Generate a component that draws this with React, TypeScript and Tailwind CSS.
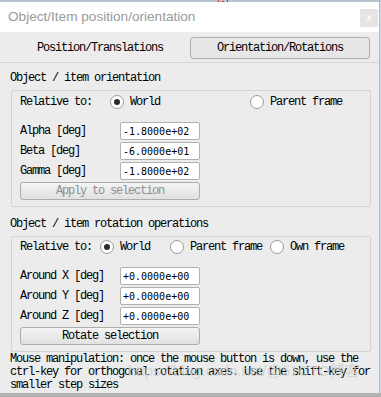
import React from "react";

const mono = { fontFamily: '"Liberation Mono", "Courier New", monospace' };
const inMono = { fontFamily: '"DejaVu Sans Mono", "Liberation Mono", monospace' };

function Radio({ checked }: { checked?: boolean }) {
  return (
    <span className="w-[14px] h-[14px] rounded-full border border-[#9c9c9c] bg-white flex items-center justify-center shrink-0">
      {checked && <span className="w-[6px] h-[6px] rounded-full bg-[#2b2b2b]" />}
    </span>
  );
}

function Field({ label, value }: { label: string; value: string }) {
  return (
    <div className="flex items-center h-[18px] mb-[2px]">
      <span className="w-[100px] text-[12px] leading-[13px] tracking-[-1.2px] text-black" style={mono}>
        {label}
      </span>
      <div
        className="w-[80px] h-[18px] bg-white border border-[#b0b0b0] rounded-[2px] pl-[2px] flex items-center text-[10px] text-black"
        style={inMono}
      >
        {value}
      </div>
    </div>
  );
}

function Btn({ children, disabled }: { children: React.ReactNode; disabled?: boolean }) {
  return (
    <div
      className={
        "w-[180px] h-[18px] border border-[#adadad] rounded-[3px] bg-gradient-to-b from-[#f4f4f4] to-[#e1e1e1] flex items-center justify-center text-[12px] leading-[13px] tracking-[-1.2px] " +
        (disabled ? "text-[#8f8f8f]" : "text-black")
      }
      style={mono}
    >
      {children}
    </div>
  );
}

export default function App() {
  return (
    <div className="w-[381px] h-[397px] relative overflow-hidden bg-[#ececec] flex flex-col">
      <div className="h-[2px] bg-[#b7c3cf] shrink-0" />
      <div className="flex flex-1 min-h-0">
        <div className="w-[379px] flex flex-col">
          {/* title bar */}
          <div className="h-[30px] bg-white flex items-center pl-[8px] pr-[1px] shrink-0">
            <span
              className="text-[13.6px] text-[#9a9a9a] flex-1"
              style={{ fontFamily: '"Liberation Sans", Arial, sans-serif' }}
            >
              Object/Item position/orientation
            </span>
            <span
              className="w-[18px] h-[18px] bg-[#e5e5e5] flex items-center justify-center text-[10px] text-white leading-none mt-[2px]"
              style={{ fontFamily: '"DejaVu Sans", sans-serif' }}
            >
              x
            </span>
          </div>
          {/* tabs */}
          <div className="flex pt-[5px] shrink-0">
            <div
              className="ml-[10px] w-[180px] h-[22px] flex items-center justify-center text-[12px] tracking-[-1.2px] text-black"
              style={mono}
            >
              Position/Translations
            </div>
            <div
              className="w-[180px] h-[22px] border border-[#adadad] rounded-[3px] bg-[#e7e7e7] flex items-center justify-center text-[12px] tracking-[-1.2px] text-black"
              style={mono}
            >
              Orientation/Rotations
            </div>
          </div>
          <div className="mt-[3px] h-[1px] bg-[#d6d6d6] shrink-0" />

          <div className="px-[11px]">
            {/* section 1 */}
            <div className="pt-[9px] text-[12px] leading-[12px] tracking-[-1.2px] text-black -ml-[1px]" style={mono}>
              Object / item orientation
            </div>
            <div className="mt-[6px] w-[360px] border border-[#d4d4d4] rounded-[2px] pl-[8px] pt-[4px] pb-[6px]">
              <div className="flex items-center h-[14px]">
                <span className="w-[90px] text-[12px] leading-[13px] tracking-[-1.2px]" style={mono}>
                  Relative to:
                </span>
                <Radio checked />
                <span className="ml-[6px] w-[120px] text-[12px] leading-[13px] tracking-[-1.2px]" style={mono}>
                  World
                </span>
                <Radio />
                <span className="ml-[6px] text-[12px] leading-[13px] tracking-[-1.2px]" style={mono}>
                  Parent frame
                </span>
              </div>
              <div className="mt-[13px]">
                <Field label="Alpha [deg]" value="-1.8000e+02" />
                <Field label="Beta [deg]" value="-6.0000e+01" />
                <Field label="Gamma [deg]" value="-1.8000e+02" />
                <Btn disabled>Apply to selection</Btn>
              </div>
            </div>

            {/* section 2 */}
            <div className="mt-[11px] text-[12px] leading-[12px] tracking-[-1.2px] text-black -ml-[1px]" style={mono}>
              Object / item rotation operations
            </div>
            <div className="mt-[6px] w-[360px] border border-[#d4d4d4] rounded-[2px] pl-[8px] pt-[3px] pb-[6px]">
              <div className="flex items-center h-[14px]">
                <span className="w-[80px] text-[12px] leading-[13px] tracking-[-1.2px]" style={mono}>
                  Relative to:
                </span>
                <Radio checked />
                <span className="ml-[6px] w-[50px] text-[12px] leading-[13px] tracking-[-1.2px]" style={mono}>
                  World
                </span>
                <Radio />
                <span className="ml-[6px] w-[80px] text-[12px] leading-[13px] tracking-[-1.2px]" style={mono}>
                  Parent frame
                </span>
                <Radio />
                <span className="ml-[6px] text-[12px] leading-[13px] tracking-[-1.2px]" style={mono}>
                  Own frame
                </span>
              </div>
              <div className="mt-[13px]">
                <Field label="Around X [deg]" value="+0.0000e+00" />
                <Field label="Around Y [deg]" value="+0.0000e+00" />
                <Field label="Around Z [deg]" value="+0.0000e+00" />
                <Btn>Rotate selection</Btn>
              </div>
            </div>

            <div
              className="mt-[1px] -ml-[1px] text-[12px] leading-[13px] tracking-[-1.2px] text-black whitespace-pre"
              style={mono}
            >
              {"Mouse manipulation: once the mouse button is down, use the\nctrl-key for orthogonal rotation axes. Use the shift-key for\nsmaller step sizes"}
            </div>
          </div>
        </div>
        <div className="w-[2px] flex">
          <div className="w-[1px] bg-[#a9b9ca]" />
          <div className="w-[1px] bg-[#d7dde4]" />
        </div>
      </div>

      {/* red glyph fragment at top edge */}
      <div className="absolute left-[218px] top-0 w-[13px] h-[2px] overflow-hidden">
        <div className="flex gap-[3px] items-start">
          <span className="w-[1px] h-[2px] bg-[#e03030]" />
          <span className="w-[2px] h-[1px] bg-[#e03030] mt-[1px]" />
          <span className="w-[1px] h-[2px] bg-[#e03030]" />
        </div>
      </div>

      {/* watermark */}
      <div
        className="absolute left-[128px] top-[361px] text-[15px] leading-[20px] text-[#cfcfcf] opacity-80 whitespace-nowrap"
        style={{ fontFamily: '"Liberation Sans", "Noto Sans CJK SC", sans-serif' }}
      >
        https://blog.csdn.net/@51CTO博客
      </div>

      {/* bottom strip */}
      <div className="absolute left-0 right-0 top-[393px] h-[4px] bg-[#b3b3b3]" />
    </div>
  );
}
